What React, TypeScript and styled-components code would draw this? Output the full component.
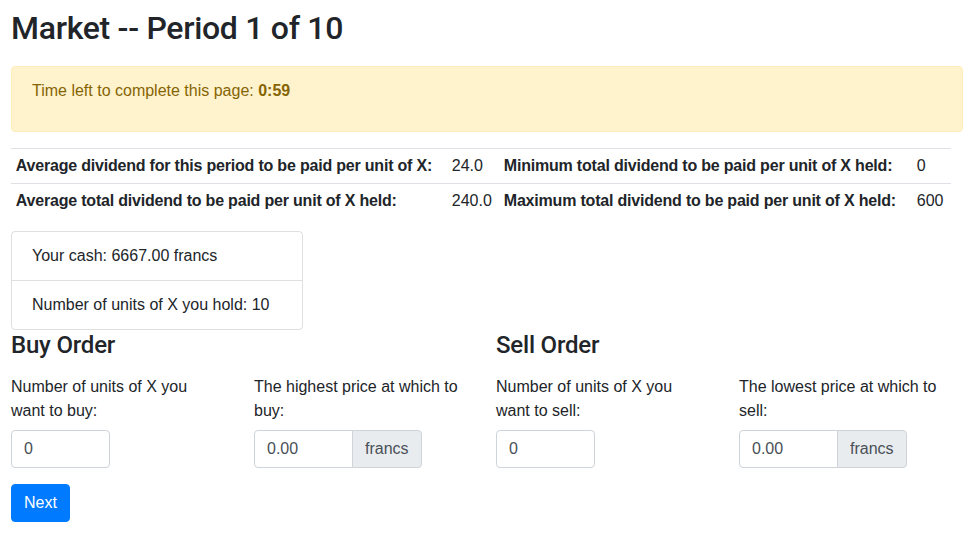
import React from "react";
import styled, { createGlobalStyle } from "styled-components";

const GlobalStyle = createGlobalStyle`
  * { box-sizing: border-box; }
  body {
    margin: 0;
    font-family: "Liberation Sans", Arial, sans-serif;
    font-size: 16px;
    line-height: 1.5;
    color: #212529;
    background: #fff;
  }
`;

const Page = styled.div`
  width: 974px;
  padding: 9px 11px 20px;
`;

const Title = styled.h2`
  margin: 0 0 19px;
  font-family: Roboto, "Liberation Sans", Arial, sans-serif;
  font-size: 32px;
  font-weight: 500;
  line-height: 1.2;
  letter-spacing: -0.3px;
`;

const Alert = styled.div`
  width: 952px;
  padding: 12px 20px;
  margin-bottom: 16px;
  background: #fff3cd;
  border: 1px solid #ffeeba;
  border-radius: 4px;
  color: #856404;
  p { margin: 0 0 16px; }
`;

const InfoTable = styled.table`
  width: 940px;
  table-layout: fixed;
  border-collapse: collapse;
  margin-bottom: 13px;
`;

const Cell = styled.td<{ $label?: boolean }>`
  padding: 4.8px;
  border-top: 1px solid #dee2e6;
  font-weight: ${(p) => (p.$label ? 700 : 400)};
  letter-spacing: ${(p) => (p.$label ? "-0.2px" : "0")};
  white-space: nowrap;
  vertical-align: top;
`;

const ListGroup = styled.ul`
  width: 292px;
  margin: 0;
  padding: 0;
  list-style: none;
  border: 1px solid rgba(0, 0, 0, 0.125);
  border-radius: 4px;
`;

const ListItem = styled.li`
  padding: 12px 20px;
  & + & { border-top: 1px solid rgba(0, 0, 0, 0.125); }
`;

const OrderRow = styled.div`
  display: grid;
  grid-template-columns: 485px 485px;
`;

const SectionTitle = styled.h4`
  margin: 1px 0 16px;
  font-family: Roboto, "Liberation Sans", Arial, sans-serif;
  font-size: 24px;
  font-weight: 500;
  line-height: 1.2;
  letter-spacing: -0.2px;
`;

const FieldGrid = styled.div`
  display: grid;
  grid-template-columns: 243px 242px;
`;

const Field = styled.div`
  margin-bottom: 16px;
`;

const Label = styled.label`
  display: block;
  max-width: 210px;
  margin-bottom: 7px;
`;

const InputGroup = styled.div`
  display: flex;
`;

const Input = styled.input<{ $grouped?: boolean }>`
  width: 99px;
  height: 38px;
  padding: 6px 12px;
  font-family: inherit;
  font-size: 16px;
  line-height: 1.5;
  color: #495057;
  background: #fff;
  border: 1px solid #ced4da;
  border-radius: ${(p) => (p.$grouped ? "4px 0 0 4px" : "4px")};
  outline: none;
`;

const Addon = styled.span`
  display: flex;
  align-items: center;
  height: 38px;
  padding: 6px 12px;
  margin-left: -1px;
  color: #495057;
  background: #e9ecef;
  border: 1px solid #ced4da;
  border-radius: 0 4px 4px 0;
`;

const Button = styled.button`
  height: 38px;
  padding: 6px 12px;
  font-family: inherit;
  font-size: 16px;
  line-height: 1.5;
  color: #fff;
  background: #007bff;
  border: 1px solid #007bff;
  border-radius: 4px;
`;

type FieldDef = { label: string; value: string; addon?: boolean };

const OrderSection = ({ title, fields }: { title: string; fields: FieldDef[] }) => (
  <div>
    <SectionTitle>{title}</SectionTitle>
    <FieldGrid>
      {fields.map((f) => (
        <Field key={f.label}>
          <Label>{f.label}</Label>
          {f.addon ? (
            <InputGroup>
              <Input $grouped defaultValue={f.value} />
              <Addon>francs</Addon>
            </InputGroup>
          ) : (
            <Input defaultValue={f.value} />
          )}
        </Field>
      ))}
    </FieldGrid>
  </div>
);

export default function App() {
  return (
    <Page>
      <GlobalStyle />
      <Title>Market -- Period 1 of 10</Title>
      <Alert>
        <p>
          Time left to complete this page: <b>0:59</b>
        </p>
      </Alert>
      <InfoTable>
        <colgroup>
          <col style={{ width: 436 }} />
          <col style={{ width: 52 }} />
          <col style={{ width: 413 }} />
          <col style={{ width: 39 }} />
        </colgroup>
        <tbody>
          <tr>
            <Cell $label>Average dividend for this period to be paid per unit of X:</Cell>
            <Cell>24.0</Cell>
            <Cell $label>Minimum total dividend to be paid per unit of X held:</Cell>
            <Cell>0</Cell>
          </tr>
          <tr>
            <Cell $label>Average total dividend to be paid per unit of X held:</Cell>
            <Cell>240.0</Cell>
            <Cell $label>Maximum total dividend to be paid per unit of X held:</Cell>
            <Cell>600</Cell>
          </tr>
        </tbody>
      </InfoTable>
      <ListGroup>
        <ListItem>Your cash: 6667.00 francs</ListItem>
        <ListItem>Number of units of X you hold: 10</ListItem>
      </ListGroup>
      <OrderRow>
        <OrderSection
          title="Buy Order"
          fields={[
            { label: "Number of units of X you want to buy:", value: "0" },
            { label: "The highest price at which to buy:", value: "0.00", addon: true },
          ]}
        />
        <OrderSection
          title="Sell Order"
          fields={[
            { label: "Number of units of X you want to sell:", value: "0" },
            { label: "The lowest price at which to sell:", value: "0.00", addon: true },
          ]}
        />
      </OrderRow>
      <Button>Next</Button>
    </Page>
  );
}
